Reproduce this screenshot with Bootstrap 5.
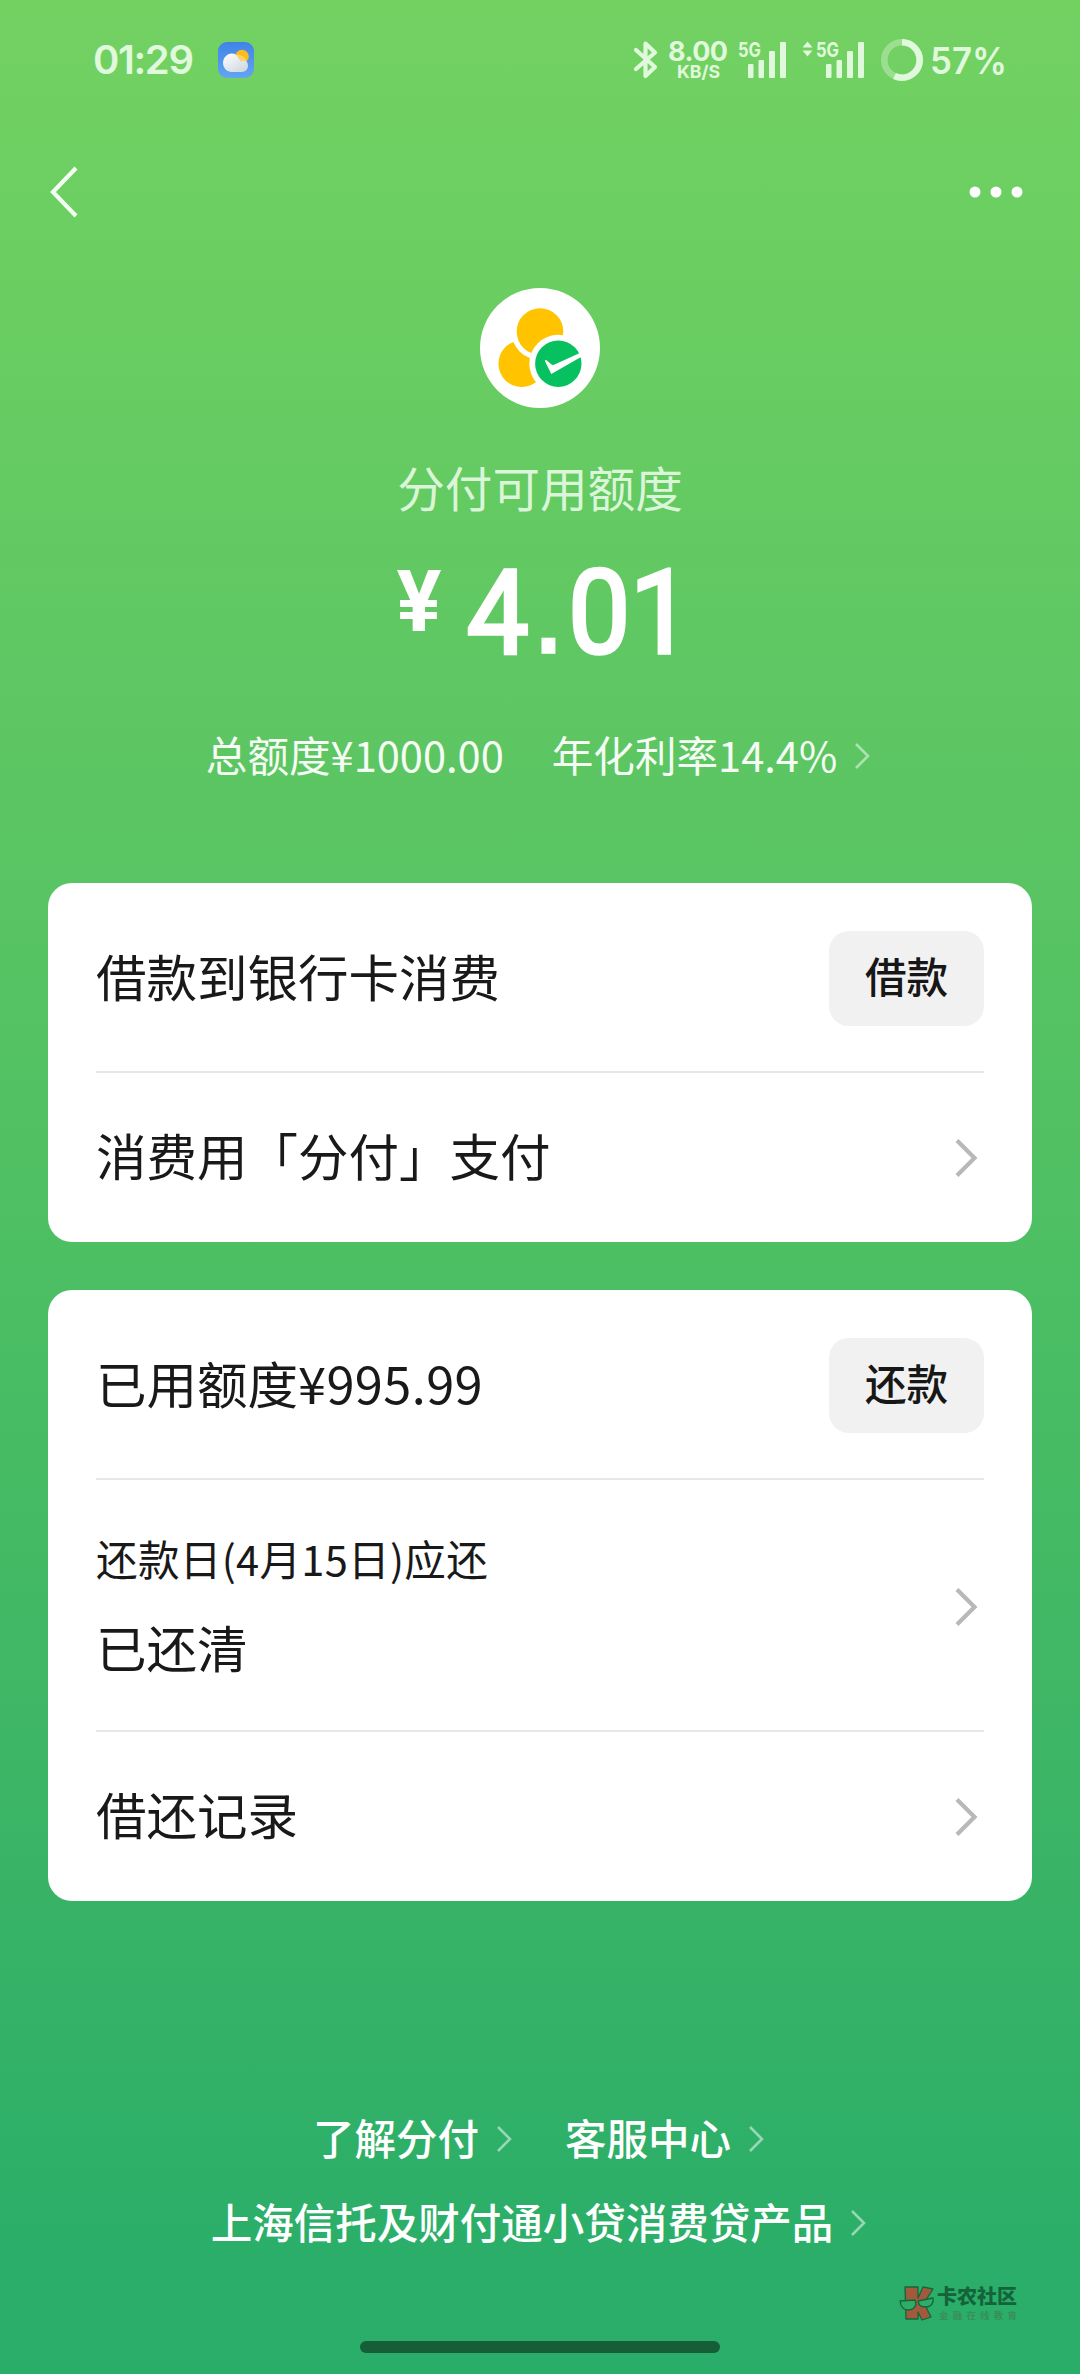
<!DOCTYPE html>
<html lang="zh-CN">
<head>
<meta charset="utf-8">
<meta name="viewport" content="width=device-width, initial-scale=1">
<title>分付</title>
<link href="https://cdn.jsdelivr.net/npm/bootstrap@5.3.0/dist/css/bootstrap.min.css" rel="stylesheet">
<style>
  html, body { margin: 0; }
  body { font-family: "Noto Sans CJK SC", sans-serif; color: #191919; background: #2aad69; }
  .screen { width: 1080px; height: 2374px; overflow: hidden; color: #fff;
    background: linear-gradient(180deg, #73d162 0, #6ccf61 200px, #5dc663 740px, #4dbf63 1250px, #38b366 1900px, #2aae69 2270px, #2aad69 100%); }
  svg { display: block; flex: none; overflow: visible; }
  .statusbar { height: 120px; padding: 0 74px 0 93px; color: #e0f8dc; font-family: Inter, sans-serif; font-weight: 600; line-height: 1; }
  .clock { font-size: 40px; width: 125px; letter-spacing: -1.4px; }
  .navtop { height: 144px; padding: 0 56px 0 49px; }
  .logo { margin: 24px auto 0; }
  .hero-title { margin-top: 49px; height: 60px; line-height: 60px; font-size: 47.6px; color: #dbf5d9; }
  .amount { margin-top: 33px; height: 120px; }
  .rates { margin-top: 54px; height: 60px; padding-right: 3px; line-height: 60px; font-size: 41.6px; color: #f4fcf3; }
  .rates svg, .links svg { margin-top: 4px; }
  .panels { margin-top: 99px; }
  .panel { margin: 0 48px; padding: 0 48px; border: 0; border-radius: 24px; color: #191919; }
  .panel-item { border-bottom: 2px solid #e7e7e7; font-size: 50.5px; line-height: 60px; }
  .panel-item:last-child { border-bottom: 0; }
  .label { margin-top: -7px; }
  .h-a .label { margin-top: -5px; }
  .num { letter-spacing: .4px; }
  .h-a { height: 190px; } .h-b { height: 169px; } .h-c { height: 252px; } .h-d { height: 169px; }
  .btn-soft { width: 155px; height: 95px; margin-top: 2px; padding: 0 0 6px; border: 0; border-radius: 20px; background: #f1f1f1; color: #171717; font-size: 41.6px; font-weight: 500; line-height: 84px; }
  .sub { font-size: 41.6px; line-height: 60px; margin-bottom: 28px; letter-spacing: .3px; }
  .chev { margin-right: 6px; }
  .links { margin-top: 206px; font-size: 41.5px; font-weight: 500; line-height: 60px; }
  .links > div { padding-right: 2px; }
  .links .second { margin-top: 24px; }
  .watermark { margin: 30px 62px 0 0; height: 40px; }
  .homebar { width: 360px; height: 12px; border-radius: 6px; background: #155e38; margin: 20px auto 0; }
</style>
<script src="https://cdn.jsdelivr.net/npm/bootstrap@5.3.0/dist/js/bootstrap.bundle.min.js"></script>
</head>
<body>
<main class="screen d-flex flex-column">
  <header class="statusbar d-flex align-items-center justify-content-between">
    <div class="d-flex align-items-center">
      <span class="clock">01:29</span>
      <svg width="36" height="36" viewBox="0 0 36 36">
        <defs>
          <linearGradient id="sky" x2="0" y2="1"><stop stop-color="#3f83e8"/><stop offset="1" stop-color="#63a5f2"/></linearGradient>
          <linearGradient id="cloud" x2=".8" y2="1"><stop stop-color="#fff"/><stop offset="1" stop-color="#cfd8e0"/></linearGradient>
        </defs>
        <rect width="36" height="36" rx="9" fill="url(#sky)"/>
        <circle cx="24" cy="14.500" r="6.800" fill="#fbbc1c"/>
        <path d="M13 30a8.500 9 0 0 1-8-9c0-5 4-9.500 8.500-9.500 4 0 6.500 2 7.500 5.500 5 0 9 2 9 6.500s-3 6.500-7 6.500z" fill="url(#cloud)"/>
        <path d="M18.500 13c2 1.500 3 4 4 6.500l6-1.500c-2-3-7-6-10-5z" fill="#f8d36c"/>
      </svg>
    </div>
    <svg width="376" height="60" viewBox="630 30 376 60" fill="#e0f8dc" font-family="Inter, sans-serif" font-weight="700">
      <path d="M636 50l19 17-9.500 9V43.500l9.500 9L636 69" fill="none" stroke="#e0f8dc" stroke-width="4.200" stroke-linejoin="round" stroke-linecap="round"/>
      <text x="668" y="61" font-size="27" textLength="60">8.00</text>
      <text x="677" y="78" font-size="17.500" textLength="43" lengthAdjust="spacingAndGlyphs">KB/S</text>
      <text x="738" y="56.500" font-size="20" textLength="23" lengthAdjust="spacingAndGlyphs">5G</text>
      <g id="bars"><rect x="748" y="64" width="5.500" height="14" rx="1"/><rect x="758.500" y="60" width="5.500" height="18" rx="1"/><rect x="769" y="51" width="6" height="27" rx="1"/><rect x="780" y="42" width="6" height="36" rx="1"/></g>
      <path d="M807.500 41.500l5 6h-10zM807.500 56.500l5-6h-10z"/>
      <text x="816" y="56.500" font-size="20" textLength="23" lengthAdjust="spacingAndGlyphs">5G</text>
      <use href="#bars" x="78"/>
      <circle cx="902" cy="60" r="17.700" fill="none" stroke="#fff" stroke-opacity=".3" stroke-width="6.600"/>
      <circle cx="902" cy="60" r="17.700" fill="none" stroke="#e0f8dc" stroke-width="6.600" pathLength="100" stroke-dasharray="57 43" transform="rotate(-90 902 60)"/>
      <text x="930" y="74" font-size="37" font-weight="600" textLength="77" lengthAdjust="spacingAndGlyphs">57%</text>
    </svg>
  </header>

  <nav class="navtop d-flex align-items-center justify-content-between">
    <svg width="30" height="52" viewBox="0 0 30 52" fill="none" stroke="#f4fdf2" stroke-width="4.200"><path d="M27 2L4 26l23 24"/></svg>
    <svg width="56" height="12" viewBox="0 0 56 12" fill="#fff"><circle cx="7" cy="6" r="5.500"/><circle cx="28" cy="6" r="5.500"/><circle cx="49" cy="6" r="5.500"/></svg>
  </nav>

  <section class="text-center">
    <svg class="logo" width="120" height="120" viewBox="0 0 120 120">
      <circle cx="60" cy="60" r="60" fill="#fff"/>
      <circle cx="41.700" cy="75.700" r="23.300" fill="#ffc300"/>
      <circle cx="60" cy="43.500" r="28.500" fill="#fff"/>
      <circle cx="60" cy="43.500" r="23.300" fill="#ffc300"/>
      <circle cx="78.300" cy="75.700" r="29" fill="#fff"/>
      <circle cx="78.300" cy="75.700" r="23.200" fill="#07c160"/>
      <path d="M65 73.300q0-2 1.500-1.100l5 4.300q1 .8 2.500.3L101 64.500v4.500L71.300 86z" fill="#fff"/>
    </svg>
    <div class="hero-title">分付可用额度</div>
    <svg class="amount mx-auto" width="280" height="120" viewBox="400 550 280 120" fill="#fff" stroke="#fff" font-family="Roboto, sans-serif">
      <text x="396.500" y="631" font-size="86" font-weight="700" stroke="none" textLength="45" lengthAdjust="spacingAndGlyphs">¥</text>
      <g transform="scale(.95 1)" font-size="117" stroke-width="3.400">
        <text x="491" y="653">4</text><text x="561" y="652" font-family="Liberation Sans, sans-serif">.</text><text x="598" y="653">0</text><text x="663" y="653">1</text>
      </g>
    </svg>
    <div class="rates d-flex justify-content-center align-items-center">
      <span>总额度¥1000.00</span>
      <span class="ms-5">年化利率14.4%</span>
      <svg class="ms-3" width="18" height="28" viewBox="0 0 18 28" fill="none" stroke="#fff" stroke-opacity=".5" stroke-width="2.600"><path d="M3 2l12 12L3 26"/></svg>
    </div>
  </section>

  <div class="panels d-flex flex-column gap-5">
  <section class="card panel">
    <div class="panel-item h-a d-flex align-items-center justify-content-between"><span class="label">借款到银行卡消费</span><button class="btn btn-soft">借款</button></div>
    <div class="panel-item h-b d-flex align-items-center justify-content-between"><span class="label">消费用「分付」支付</span>
      <svg class="chev" width="24" height="40" viewBox="0 0 24 40" fill="none" stroke="#b8b8b8" stroke-width="4.200"><path d="M3 2.500L20.500 20 3 37.500"/></svg></div>
  </section>

  <section class="card panel">
    <div class="panel-item h-a d-flex align-items-center justify-content-between"><span class="label">已用额度<span class="num">¥995.99</span></span><button class="btn btn-soft">还款</button></div>
    <div class="panel-item h-c d-flex align-items-center justify-content-between">
      <div class="label"><div class="sub">还款日(4月15日)应还</div><div>已还清</div></div>
      <svg class="chev mt-1" width="24" height="40" viewBox="0 0 24 40" fill="none" stroke="#b8b8b8" stroke-width="4.200"><path d="M3 2.500L20.500 20 3 37.500"/></svg></div>
    <div class="panel-item h-d d-flex align-items-center justify-content-between"><span class="label">借还记录</span>
      <svg class="chev" width="24" height="40" viewBox="0 0 24 40" fill="none" stroke="#b8b8b8" stroke-width="4.200"><path d="M3 2.500L20.500 20 3 37.500"/></svg></div>
  </section>
  </div>

  <footer class="links">
    <div class="d-flex justify-content-center align-items-center">
      <span>了解分付</span><svg class="ms-3" width="18" height="28" viewBox="0 0 18 28" fill="none" stroke="#fff" stroke-opacity=".5" stroke-width="2.600"><path d="M3 2l12 12L3 26"/></svg>
      <span class="ms-5 ps-1">客服中心</span><svg class="ms-3" width="18" height="28" viewBox="0 0 18 28" fill="none" stroke="#fff" stroke-opacity=".5" stroke-width="2.600"><path d="M3 2l12 12L3 26"/></svg>
    </div>
    <div class="second d-flex justify-content-center align-items-center">
      <span>上海信托及财付通小贷消费贷产品</span><svg class="ms-3" width="18" height="28" viewBox="0 0 18 28" fill="none" stroke="#fff" stroke-opacity=".5" stroke-width="2.600"><path d="M3 2l12 12L3 26"/></svg>
    </div>
  </footer>

  <div class="watermark d-flex justify-content-end">
    <svg width="120" height="40" viewBox="898 2282 120 40" font-family="Noto Sans CJK SC, sans-serif" font-weight="900">
      <g stroke="#17653b" stroke-width="1.300" stroke-linejoin="round">
        <path d="M905 2288h13v11l5-11 10 2-9 14 7 14-9 3-4-8v7h-12z" fill="#a15b3c"/>
        <path d="M900 2302l15-1 1 4c-1 4-4 6-8 6s-7-2-8-9zM918 2302l15-3c1 5-2 9-7 9s-7-1-8-6z" fill="#2dad67"/>
      </g>
      <text x="937" y="2304.500" font-size="20" textLength="80" fill="#14633a">卡农社区</text>
      <text x="939" y="2320" font-size="9.500" font-weight="700" textLength="78" fill="#398f58">金融在线教育</text>
    </svg>
  </div>
  <div class="homebar"></div>
</main>
</body>
</html>
